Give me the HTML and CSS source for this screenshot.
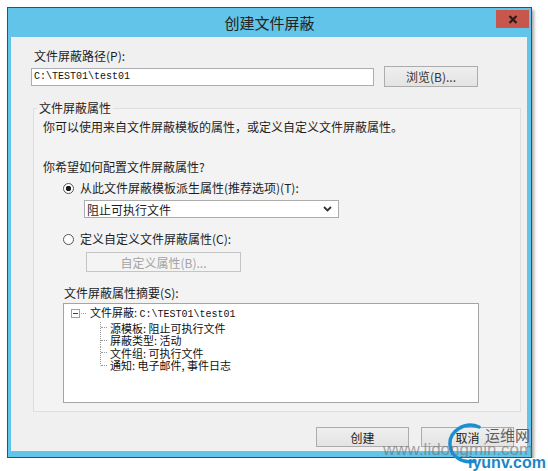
FILE: index.html
```html
<!DOCTYPE html>
<html lang="zh-CN">
<head>
  <meta charset="UTF-8">
  <title>创建文件屏蔽</title>
  <link rel="stylesheet" href="styles.css">
</head>
<body>
  <div class="window">
      <div class="titlebar">
          <span class="title">创建文件屏蔽</span>
          <button class="close">
              <svg width="10" height="9" viewBox="0 0 10 9"><path d="M1.5 1 L8.5 8 M8.5 1 L1.5 8" stroke="#2b1b1b" stroke-width="2.2"/></svg>
          </button>
      </div>
      <div class="content">
          <div class="path-label">文件屏蔽路径(P):</div>
          <div class="path-row">
              <div class="textbox mono">C:\TEST01\test01</div>
              <button class="btn browse">浏览(B)...</button>
          </div>

          <fieldset class="group">
              <legend>文件屏蔽属性</legend>
              <p class="intro">你可以使用来自文件屏蔽模板的属性，或定义自定义文件屏蔽属性。</p>
              <p class="question">你希望如何配置文件屏蔽属性?</p>

              <div class="option"><span class="radio checked"></span>从此文件屏蔽模板派生属性(推荐选项)(T):</div>
              <div class="select">
                  <span>阻止可执行文件</span>
                  <svg width="9" height="6" viewBox="0 0 9 6"><polyline points="1,1 4.5,4.5 8,1" fill="none" stroke="#333" stroke-width="1.8"/></svg>
              </div>

              <div class="option second"><span class="radio"></span>定义自定义文件屏蔽属性(C):</div>
              <button class="btn custom" disabled>自定义属性(B)...</button>

              <div class="summary-label">文件屏蔽属性摘要(S):</div>
              <div class="tree">
                  <div class="root">
                      <svg class="expander" width="9" height="9" viewBox="0 0 9 9"><rect x="0.5" y="0.5" width="8" height="8" fill="#fff" stroke="#a0a0a0"/><line x1="2" y1="4.5" x2="7" y2="4.5" stroke="#444"/></svg>
                      <span class="stub"></span>
                      <span>文件屏蔽:&nbsp;<span class="mono">C:\TEST01\test01</span></span>
                  </div>
                  <div class="children">
                      <div class="child"><span class="stub"></span>源模板:&nbsp;阻止可执行文件</div>
                      <div class="child"><span class="stub"></span>屏蔽类型:&nbsp;活动</div>
                      <div class="child"><span class="stub"></span>文件组:&nbsp;可执行文件</div>
                      <div class="child"><span class="stub"></span>通知:&nbsp;电子邮件,&nbsp;事件日志</div>
                  </div>
              </div>
          </fieldset>

          <div class="actions">
              <button class="btn">创建</button>
              <button class="btn">取消</button>
          </div>
      </div>
  </div>

  <!-- watermark stamped over the screenshot -->
  <div class="watermark">
      <svg class="swoosh" width="40" height="42" viewBox="0 0 40 42"><path d="M34 4 C20 -2 4 8 5 22 C6 34 18 41 30 38" fill="none" stroke="#1b8fd2" stroke-width="3.5" stroke-linecap="round"/></svg>
      <span class="wm-cn">运维网</span>
      <span class="wm-url">www.lidongmin.com</span>
      <span class="wm-site">iyunv.com</span>
  </div>
</body>
</html>
```

FILE: styles.css
```css
body {
    margin: 0;
    background: #fff;
    font-family: "Noto Sans CJK SC", sans-serif;
    font-size: 12px;
    color: #1e1e1e;
}
.mono {
    font-family: "Liberation Mono", monospace;
    font-size: 10px;
}
.window {
    margin: 7px 0 0 7px;
    width: 523px;
    height: 449px;
    border: 1px solid #4a4a4a;
    background: #62c4e8;
    box-shadow: 2px 3px 3px rgba(0,0,0,0.35);
    display: flex;
    flex-direction: column;
}
.titlebar {
    height: 29px;
    display: flex;
    flex-shrink: 0;
}
.title {
    flex: 1;
    text-align: center;
    font-size: 15px;
    line-height: 29px;
    padding-left: 35px;
    color: #222;
}
.close {
    width: 33px;
    height: 18px;
    margin: 2px 2px 0 0;
    padding: 0;
    border: none;
    background: #c7574c;
    display: flex;
    align-items: center;
    justify-content: center;
}
.content {
    flex: 1;
    margin: 0 4px 6px 3px;
    background: #f0f0f0;
    padding-top: 12px;
}
.path-label {
    margin-left: 23px;
    line-height: 14px;
}
.path-row {
    display: flex;
    align-items: center;
    margin-top: 3px;
    padding-left: 20px;
}
.textbox {
    box-sizing: border-box;
    width: 343px;
    height: 18px;
    line-height: 16px;
    padding-left: 2px;
    border: 1px solid #abadb3;
    background: #fff;
    color: #111;
}
.btn {
    box-sizing: border-box;
    height: 21px;
    padding: 0;
    border: 1px solid #acacac;
    background: linear-gradient(#efefef, #e3e3e3);
    font-family: "Noto Sans CJK SC", sans-serif;
    font-size: 12px;
    color: #333;
}
.browse {
    width: 94px;
    margin-left: 10px;
}
.group {
    box-sizing: border-box;
    width: 488px;
    margin: 14px 0 0 22px;
    padding: 0 0 8px 9px;
    border: 1px solid #dedede;
    background: #f3f3f3;
}
.group legend {
    line-height: 14px;
    padding: 0 2px;
    margin-left: -6px;
}
.intro {
    margin: 5px 0 0;
    line-height: 14px;
}
.question {
    margin: 26px 0 0;
    line-height: 14px;
}
.option {
    display: flex;
    align-items: center;
    margin: 7px 0 0 20px;
    line-height: 14px;
}
.option.second {
    margin-top: 14px;
}
.radio {
    box-sizing: border-box;
    width: 11px;
    height: 11px;
    margin-right: 6px;
    border: 1px solid #555;
    border-radius: 50%;
    background: #fff;
}
.radio.checked {
    background: radial-gradient(circle, #1a1a1a 0 2.5px, #fff 3px);
}
.select {
    box-sizing: border-box;
    width: 255px;
    height: 18px;
    margin: 5px 0 0 41px;
    padding: 0 6px 0 2px;
    display: flex;
    align-items: center;
    justify-content: space-between;
    border: 1px solid #acacac;
    background: #fff;
}
.custom {
    display: block;
    width: 155px;
    height: 20px;
    margin: 6px 0 0 43px;
    border-color: #c4c4c4;
    background: #f4f4f4;
    color: #a3a3a3;
}
.summary-label {
    margin: 14px 0 0 21px;
    line-height: 14px;
}
.tree {
    box-sizing: border-box;
    width: 416px;
    height: 100px;
    margin: 3px 0 0 20px;
    padding-top: 2px;
    border: 1px solid #a5a5a5;
    background: #fff;
    font-size: 11px;
    line-height: 12.5px;
    color: #111;
}
.root {
    display: flex;
    align-items: center;
    padding-left: 7px;
}
.stub {
    width: 6px;
    margin: 0 3px 0 1px;
    border-top: 1px dotted #999;
}
.root .stub {
    width: 5px;
    margin-right: 4px;
}
.children {
    margin-left: 36px;
}
.child {
    display: flex;
    align-items: center;
    background: repeating-linear-gradient(to bottom, #999 0 1px, transparent 1px 2px) no-repeat 0 0 / 1px 100%;
}
.child:last-child {
    background-size: 1px 50%;
}
.child .stub {
    margin-left: 1px;
}
.actions {
    display: flex;
    justify-content: flex-end;
    gap: 12px;
    margin-top: 15px;
    padding-right: 13px;
}
.actions .btn {
    width: 93px;
    height: 20px;
    color: #222;
}
.watermark {
    position: absolute;
    left: 380px;
    top: 420px;
    width: 168px;
    height: 51px;
}
.swoosh {
    position: absolute;
    left: 65px;
    top: 3px;
}
.wm-cn {
    position: absolute;
    left: 105px;
    top: 6px;
    font-size: 15px;
    line-height: 18px;
    color: #5e5e5e;
}
.wm-url {
    position: absolute;
    left: 3px;
    top: 21px;
    font-family: "Liberation Sans", sans-serif;
    font-size: 17px;
    line-height: 18px;
    color: rgba(110,110,110,0.6);
}
.wm-site {
    position: absolute;
    left: 88px;
    top: 35px;
    font-family: "Liberation Sans", sans-serif;
    font-weight: bold;
    font-size: 16px;
    line-height: 16px;
    color: #1b86c8;
}
```
